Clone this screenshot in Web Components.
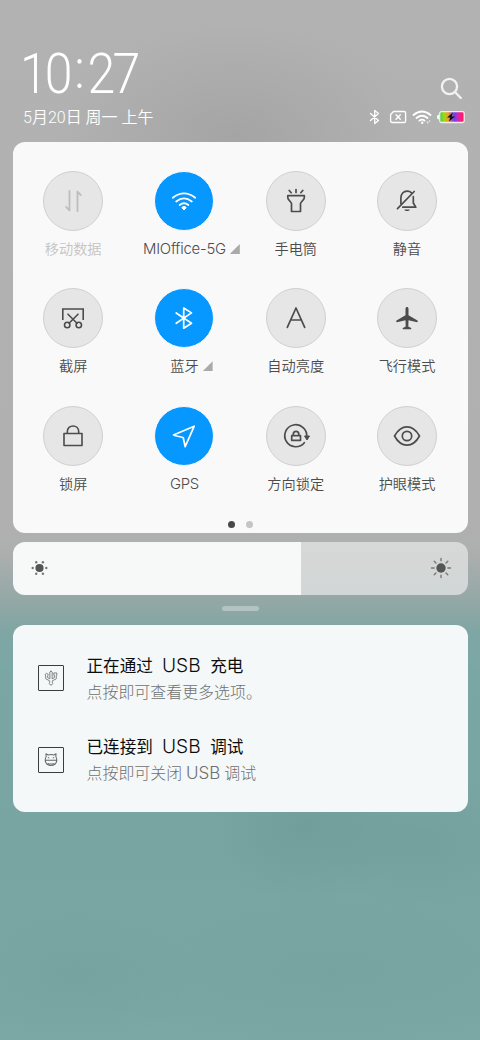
<!DOCTYPE html>
<html lang="zh-CN">
<head>
<meta charset="utf-8">
<title>控制中心</title>
<style>
html,body{margin:0;padding:0;height:100%}
body{font-family:Roboto,"Noto Sans CJK SC",sans-serif;overflow:hidden}
</style>
</head>
<body>
<control-center></control-center>
<script>
const define=(name,html,setup)=>{
  const t=document.createElement('template');
  t.innerHTML=html;
  customElements.define(name,class extends HTMLElement{
    constructor(){
      super();
      this.attachShadow({mode:'open'}).appendChild(t.content.cloneNode(true));
    }
    connectedCallback(){ if(setup) setup(this,this.shadowRoot); }
  });
};

const S='fill="none" stroke="currentColor" stroke-linecap="round" stroke-linejoin="round"';
const glyphs={
  data:`<g ${S} stroke-width="1.8"><path d="M12.500 6v19.5l-3.300-3.600M20.500 26V6.500l3.300 3.600"/></g>`,
  wifi:`<g ${S} stroke-width="1.8"><path d="M4.800 12.800Q16 4 27.200 12.800M8.200 16.500Q16 10.200 23.800 16.500M11.700 20Q16 16.600 20.300 20"/></g><path d="M13.800 22.500a3 3 0 0 1 4.400 0L16 25z" fill="currentColor" stroke="currentColor" stroke-linejoin="round"/>`,
  torch:`<g ${S} stroke-width="1.700"><path d="M7.800 10.700h16.500v2.100c0 2.500-3.800 3.500-3.800 6v7.700h-9v-7.700c0-2.500-3.700-3.500-3.700-6zM16 4.500v3M9.200 5.500l2 2.200M22.800 5.500l-2 2.200"/></g>`,
  mute:`<g ${S} stroke-width="1.700"><path d="M9.900 18.800V13c0-4.200 2.600-6.800 6.200-6.800 1.800 0 3.300.500 4.400 1.600M22.300 11.700V18l2.500 4.200H11.800M6.500 23.700L23.200 6.500"/></g><path d="M13.300 24.400h5.600c-.8 2.200-4.800 2.200-5.600 0z" fill="currentColor"/>`,
  shot:`<g ${S} stroke-width="1.600"><path d="M5.800 17.200V7h20.400v10.200" stroke-linecap="square" stroke-linejoin="miter"/><path d="M11 12.200l9 9M21 12.200l-9 9"/><circle cx="10.200" cy="23" r="2.700"/><circle cx="21.800" cy="23" r="2.700"/></g>`,
  bt:`<g ${S} stroke-width="1.700"><path d="M8.200 11l15.300 10.300-7.800 4.900V6l7.800 4.900L8.200 21.300"/></g>`,
  auto:`<g ${S} stroke-width="1.700"><path d="M7.300 25.300L16 6l8.700 19.300M10.700 18h10.600"/></g>`,
  plane:`<path d="M14.500 6.700c0-2.400 3-2.400 3 0v6.600l9 5.200c.5.500.3 1.700-.4 1.700l-8.600-1.900-.2 6.200 2.800 1.400c.4.500.2 1.400-.4 1.400h-7.400c-.6 0-.8-.9-.4-1.400l2.800-1.400-.2-6.200-8.600 1.900c-.7 0-.9-1.200-.4-1.700l9-5.200z" fill="currentColor"/>`,
  lock:`<g ${S} stroke-width="1.600"><path d="M7 13.500h18v12H7zM10.300 13.200v-1.400c0-7.800 11.400-7.800 11.400 0v1.400"/></g>`,
  gps:`<g ${S} stroke-width="1.700"><path d="M26.200 6.200L5.500 15c0 .5 9.700 2.300 9.700 2.500l2 9.200z"/></g>`,
  rotate:`<g ${S} stroke-width="1.700"><path d="M24.300 22.700A11 11 0 1 1 26.700 17"/><path d="M11.700 15.700h8.800v4.600h-8.800zM13.300 15.500v-1.200c0-3.800 5.500-3.800 5.500 0v1.200"/></g><path d="M24.500 16h5l-2.500 4z" fill="currentColor" stroke="currentColor" stroke-linejoin="round"/>`,
  eye:`<g ${S} stroke-width="1.700"><path d="M3.500 16C10.200 3.800 21.800 3.800 28.500 16C21.800 28.200 10.200 28.200 3.500 16z"/><circle cx="16" cy="16" r="4.700"/></g>`
};

define('status-icons',`
<style>:host{display:block;width:98px;height:16px;color:#fff}svg{display:block}</style>
<svg width="98" height="16" viewBox="0 0 98 16">
<defs><linearGradient id="b"><stop offset="0" stop-color="#28d838"/><stop offset=".17" stop-color="#9bd81c"/><stop offset=".34" stop-color="#f0a020"/><stop offset=".48" stop-color="#a060b0"/><stop offset=".62" stop-color="#6b3cff"/><stop offset=".72" stop-color="#c030c0"/><stop offset=".82" stop-color="#ff1c78"/><stop offset="1" stop-color="#f51b75"/></linearGradient></defs>
<g fill="none" stroke="currentColor" stroke-width="1.350" stroke-linecap="round" stroke-linejoin="round">
<path d="M3.500 4.500l8 7-3.800 3V1.500l3.800 3-8 7"/>
<path d="M26.500 2.500h10.500q1.600 0 1.600 1.600v7.800q0 1.600-1.600 1.600H25.200q-1.600 0-1.600-1.600V5.500zM29 5.700l4.300 4.600M33.300 5.700L29 10.300"/>
<path d="M46.500 6Q55 -1 63.500 6M49.500 9Q55 4.600 60.500 9" stroke-width="1.800"/><path d="M52.300 11.700Q55 9.700 57.700 11.700" stroke-width="1.700"/>
</g><circle cx="55.200" cy="13.700" r="1.200" fill="#fff"/><path d="M59.500 13.500l1.700-1.500v3zM62 10.700l1.300 1.300-1.300 1.300z" fill="#eee"/>
<rect x="72.700" y="2.700" width="24.500" height="10.800" rx="1.800" fill="url(#b)" stroke="#f3eee9" stroke-width="1.300"/><path d="M72 5.500q-2 0-2 2.500t2 2.500z" fill="#fff"/>
<path d="M86 3.500l-6 5h3.300l-1.300 4 6-5h-3.400z" fill="#111"/>
</svg>`);

define('shade-header',`
<style>
:host{display:grid;grid-template-columns:1fr auto;grid-template-rows:56px 28px;height:142px;box-sizing:border-box;padding:48px 15px 0 23px;color:#fff}
.time{font-weight:300;font-size:55.500px;line-height:54px;letter-spacing:-3.200px;white-space:nowrap;margin-left:-3px;transform:scaleX(.9);transform-origin:0 0}
.time span{margin:0 6.500px 0 5px;vertical-align:5px;line-height:0}
.date{font-size:16px;line-height:28px;font-weight:350;white-space:nowrap}
.find{align-self:end;justify-self:end;width:24px;height:24px;margin:0 2px 4.500px 0}
status-icons{justify-self:end;margin-top:5px}
</style>
<div class="time">10<span>:</span>27</div>
<svg class="find" viewBox="0 0 24 24" fill="none" stroke="#f2f2f2" stroke-width="2.300" stroke-linecap="round"><circle cx="10.500" cy="10.500" r="7.600"/><path d="M16.200 16.200l5.600 5.800"/></svg>
<div class="date">5月20日 周一 上午</div>
<status-icons></status-icons>`);

define('quick-tile',`
<style>
:host{display:flex;flex-direction:column;align-items:center;height:117.300px;color:#4c4c4c}
.disc{width:60px;height:60px;border-radius:50%;box-sizing:border-box;border:1px solid #d0d0d0;background:#e6e6e6;display:grid;place-items:center}
svg{display:block;width:32px;height:32px}
:host([on]) .disc{background:#0798ff;border-color:#f9f9f9;color:#fff}
:host([off]){color:#bdbdbd}
.label{position:relative;margin-top:8px;font-size:14.200px;line-height:20px;white-space:nowrap;font-weight:350}
:host([off]) .label{color:#c4c4c4}
:host([latin]) .label{font-family:Inter,Roboto,sans-serif;font-size:14.900px;font-weight:300;letter-spacing:-.25px}
.label i{display:none;position:absolute;left:calc(100% + 4px);top:5px;width:10px;height:10px;background:#aaa;clip-path:polygon(100% 0,100% 100%,0 100%)}
:host([more]) .label i{display:block}
</style>
<div class="disc"><svg viewBox="0 0 32 32"></svg></div>
<div class="label"><slot></slot><i></i></div>`,
(el,r)=>{r.querySelector('svg').innerHTML=glyphs[el.getAttribute('icon')];});

define('quick-panel',`
<style>
:host{display:block;height:391px;box-sizing:border-box;border-radius:12px;background:#f9f9f9;padding:29px 4.800px 0 5px}
.grid{display:grid;grid-template-columns:repeat(4,111.300px);height:352px}
.dots{display:flex;justify-content:center;gap:11px;margin-top:-2px}
.dots b{width:7px;height:7px;border-radius:50%;background:#484848}
.dots b+b{background:#c5c5c5}
</style>
<div class="grid"><slot></slot></div>
<div class="dots"><b></b><b></b></div>`);

define('brightness-slider',`
<style>
:host{display:flex;justify-content:space-between;align-items:center;height:53px;box-sizing:border-box;border-radius:12px;padding:0 16px;color:#555;
background:linear-gradient(90deg,#f7f9f8 288.500px,transparent 288.500px),linear-gradient(#d7d8d7,#d1d6d6)}
svg{display:block;width:22px;height:22px}
</style>
<svg viewBox="0 0 22 22" fill="currentColor"><circle cx="10.500" cy="11" r="4.100"/><g fill="#777"><circle cx="3.700" cy="11" r="1.200"/><circle cx="17.300" cy="11" r="1.200"/><circle cx="7.200" cy="5.200" r="1.200"/><circle cx="13.900" cy="5.200" r="1.200"/><circle cx="7.200" cy="16.700" r="1.200"/><circle cx="13.900" cy="16.700" r="1.200"/></g></svg>
<svg viewBox="0 0 22 22" fill="currentColor"><circle cx="11" cy="11" r="4.700"/><path d="M11 1.500v2.300M11 18.200v2.300M1.500 11h2.600M17.900 11h2.600M4.200 4.200l1.800 1.800M16 16l1.800 1.800M4.200 17.800L6 16M16 6l1.800-1.800" fill="none" stroke="#777" stroke-width="1.400" stroke-linecap="round"/></svg>`);

define('notice-row',`
<style>
:host{display:flex;align-items:center;height:81.500px;padding-left:25.500px}
.app{display:grid;place-items:center;width:26px;height:26px;box-sizing:border-box;border:1px solid #3c3c3c;border-radius:1px;margin-right:22.500px}
.text{padding-top:3px}
.title{font-size:16.600px;line-height:26px;height:26px;color:#0c0c0c;white-space:pre;font-weight:400}
.sub{font-size:15.950px;line-height:26px;height:26px;color:#707070;white-space:nowrap;font-weight:300}
</style>
<div class="app"><slot name="icon"></slot></div>
<div class="text"><div class="title"><slot name="title"></slot></div><div class="sub"><slot></slot></div></div>`);

define('notice-card',`
<style>
:host{display:block;height:187px;box-sizing:border-box;border-radius:12px;background:#f4f8f8;padding:12.500px 0}
svg{display:block;width:18px;height:18px}
b{font-family:Inter,Roboto,sans-serif;font-weight:350;font-size:19.200px;line-height:0;margin:0 1.400px 0 .8px}
em{font-family:Inter,Roboto,sans-serif;font-style:normal;font-weight:300;font-size:17px;line-height:0}
</style>
<notice-row>
<svg slot="icon" viewBox="0 0 16 16" fill="none" stroke="#777" stroke-width=".8" stroke-linejoin="round"><path d="M8 1.500l1.500 2.200H9v5l2-1V5.500h-.5v-2h2.700v2h-.5v3.200L9.200 10.500v1.300a1.500 1.500 0 1 1-2.400 0v-1.300L3.300 8.700V6.200a1.300 1.300 0 1 1 1.700 0v1.500l2 1v-5h-.5z"/></svg>
<span slot="title">正在通过  <b>USB</b>  充电</span>点按即可查看更多选项。</notice-row>
<notice-row>
<svg slot="icon" viewBox="0 0 16 16" fill="none" stroke="#666" stroke-width=".9" stroke-linejoin="round"><path d="M3.700 5L3.500 2.500l2 1q2.500-.9 5 0l2-1L12.300 5c1.600 3 .7 5.300-.8 6.800q-3.500 2.200-7 0C3 10.300 2.100 8 3.700 5zM3.300 8.200h9.400M5 11q3 1 6 0"/><path d="M5.800 5.500v1M10.200 5.500v1" stroke-width="1.200"/></svg>
<span slot="title">已连接到  <b>USB</b>  调试</span>点按即可关闭 <em>USB</em> 调试</notice-row>`);

define('control-center',`
<style>
:host{display:block;width:480px;height:1040px;overflow:hidden;
background:
radial-gradient(ellipse 180px 110px at 235px 135px,rgba(145,145,145,.4),transparent),
radial-gradient(ellipse 100px 80px at 305px 825px,rgba(95,135,132,.28),transparent),
radial-gradient(ellipse 100px 70px at 420px 840px,rgba(95,135,132,.18),transparent),
radial-gradient(ellipse 120px 70px at 75px 975px,rgba(100,140,140,.18),transparent),
radial-gradient(ellipse 250px 80px at 330px 975px,rgba(100,140,140,.16),transparent),
linear-gradient(#b2b2b2 0,#b0b0b0 520px,#aeafaf 550px,#94a8a6 600px,#80a6a4 630px,#7aa7a4 670px,#78a5a2 850px,#7ba8a5 1040px)}
main{display:flex;flex-direction:column;padding:0 12.500px}
brightness-slider{margin-top:8.500px}
.handle{align-self:center;width:37px;height:5.500px;border-radius:3px;background:#b3c3c1;margin:11px 0 14px}
</style>
<shade-header></shade-header>
<main>
<quick-panel>
<quick-tile icon="data" off>移动数据</quick-tile>
<quick-tile icon="wifi" on more latin>MIOffice-5G</quick-tile>
<quick-tile icon="torch">手电筒</quick-tile>
<quick-tile icon="mute">静音</quick-tile>
<quick-tile icon="shot">截屏</quick-tile>
<quick-tile icon="bt" on more>蓝牙</quick-tile>
<quick-tile icon="auto">自动亮度</quick-tile>
<quick-tile icon="plane">飞行模式</quick-tile>
<quick-tile icon="lock">锁屏</quick-tile>
<quick-tile icon="gps" on latin>GPS</quick-tile>
<quick-tile icon="rotate">方向锁定</quick-tile>
<quick-tile icon="eye">护眼模式</quick-tile>
</quick-panel>
<brightness-slider></brightness-slider>
<div class="handle"></div>
<notice-card></notice-card>
</main>`);
</script>
</body>
</html>
